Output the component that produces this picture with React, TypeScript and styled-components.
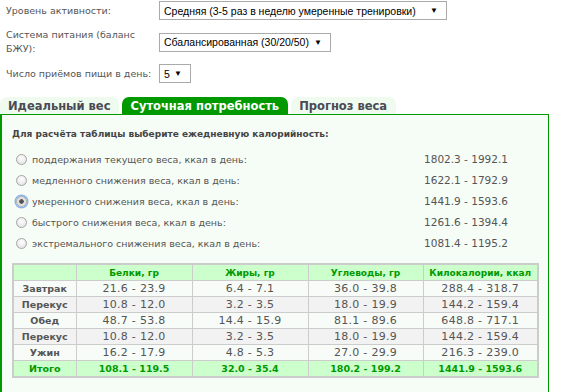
import React from 'react'
import styled, { createGlobalStyle } from 'styled-components'

const GlobalStyle = createGlobalStyle`
  body {
    margin: 0;
    background: #fff;
    font-family: "DejaVu Sans", Verdana, sans-serif;
    font-size: 9.5px;
    color: #555;
  }
`

const green = '#009900'

const options = [
  { label: 'поддержания текущего веса, ккал в день:', value: '1802.3 - 1992.1' },
  { label: 'медленного снижения веса, ккал в день:', value: '1622.1 - 1792.9' },
  { label: 'умеренного снижения веса, ккал в день:', value: '1441.9 - 1593.6', checked: true },
  { label: 'быстрого снижения веса, ккал в день:', value: '1261.6 - 1394.4' },
  { label: 'экстремального снижения веса, ккал в день:', value: '1081.4 - 1195.2' },
]

const meals = [
  ['Завтрак', '21.6 - 23.9', '6.4 - 7.1', '36.0 - 39.8', '288.4 - 318.7'],
  ['Перекус', '10.8 - 12.0', '3.2 - 3.5', '18.0 - 19.9', '144.2 - 159.4'],
  ['Обед', '48.7 - 53.8', '14.4 - 15.9', '81.1 - 89.6', '648.8 - 717.1'],
  ['Перекус', '10.8 - 12.0', '3.2 - 3.5', '18.0 - 19.9', '144.2 - 159.4'],
  ['Ужин', '16.2 - 17.9', '4.8 - 5.3', '27.0 - 29.9', '216.3 - 239.0'],
]

const App = () => {
  return (
    <Page>
      <GlobalStyle />
      <Form>
        <Label>Уровень активности:</Label>
        <Select $width={288}>
          <span>Средняя (3-5 раз в неделю умеренные тренировки)</span>
          <Arrow>▼</Arrow>
        </Select>
        <Label>Система питания (баланс БЖУ):</Label>
        <Select $width={172}>
          <span>Сбалансированная (30/20/50)</span>
          <Arrow>▼</Arrow>
        </Select>
        <Label>Число приёмов пищи в день:</Label>
        <Select $width={32}>
          <span>5</span>
          <Arrow>▼</Arrow>
        </Select>
      </Form>

      <Tabs>
        <Tab>Идеальный вес</Tab>
        <Tab $active>Суточная потребность</Tab>
        <Tab>Прогноз веса</Tab>
      </Tabs>

      <Panel>
        <Heading>Для расчёта таблицы выберите ежедневную калорийность:</Heading>
        <Options>
          {options.map((o) => (
            <Option key={o.label}>
              <Radio $checked={!!o.checked} />
              <OptionLabel>{o.label}</OptionLabel>
              <OptionValue>{o.value}</OptionValue>
            </Option>
          ))}
        </Options>

        <Table>
          <colgroup>
            <col style={{ width: 63 }} />
            <col style={{ width: 116 }} />
            <col style={{ width: 116 }} />
            <col style={{ width: 115 }} />
            <col style={{ width: 115 }} />
          </colgroup>
          <thead>
            <tr>
              <HeadCell />
              <HeadCell>Белки, гр</HeadCell>
              <HeadCell>Жиры, гр</HeadCell>
              <HeadCell>Углеводы, гр</HeadCell>
              <HeadCell>Килокалории, ккал</HeadCell>
            </tr>
          </thead>
          <tbody>
            {meals.map((row, i) => (
              <Row key={i} $odd={i % 2 === 1}>
                <MealCell>{row[0]}</MealCell>
                {row.slice(1).map((v, j) => (
                  <Cell key={j}>{v}</Cell>
                ))}
              </Row>
            ))}
            <TotalRow>
              <td>Итого</td>
              <td>108.1 - 119.5</td>
              <td>32.0 - 35.4</td>
              <td>180.2 - 199.2</td>
              <td>1441.9 - 1593.6</td>
            </TotalRow>
          </tbody>
        </Table>
      </Panel>
    </Page>
  )
}

const Page = styled.div`
  width: 573px;
  height: 392px;
  overflow: hidden;
`

const Form = styled.div`
  display: grid;
  grid-template-columns: 153px auto;
  row-gap: 8px;
  align-items: center;
  justify-items: start;
  padding: 1px 0 0 6px;
`

const Label = styled.div`
  line-height: 14px;
  width: 152px;
  color: #555;
`

const Select = styled.div<{ $width: number }>`
  display: flex;
  align-items: center;
  justify-content: space-between;
  box-sizing: border-box;
  width: ${(p) => p.$width}px;
  height: 19px;
  padding: 0 8px 0 4px;
  border: 1px solid #aaa;
  background: #fff;
  color: #000;
  font-family: "Liberation Sans", Arial, sans-serif;
  font-size: 10.5px;
  white-space: nowrap;
`

const Arrow = styled.span`
  font-size: 8px;
`

const Tabs = styled.div`
  display: flex;
  gap: 3px;
  margin-top: 14px;
  height: 17px;
  align-items: flex-end;
`

const Tab = styled.div<{ $active?: boolean }>`
  height: 17px;
  line-height: 18px;
  padding: 0 9px 0 8px;
  border-radius: 7px 7px 0 0;
  font-weight: bold;
  font-size: 11.5px;
  background: ${(p) => (p.$active ? green : '#eefbee')};
  color: ${(p) => (p.$active ? '#fff' : '#4a4a55')};
`

const Panel = styled.div`
  width: 536px;
  border: 1px solid ${green};
  border-left-width: 2px;
  background: #f6fcf6;
  padding: 12px 0 40px 10px;
`

const Heading = styled.div`
  font-weight: bold;
  font-size: 9px;
  color: #444;
  line-height: 14px;
`

const Options = styled.div`
  display: flex;
  flex-direction: column;
  gap: 7px;
  margin-top: 11px;
  width: 496px;
`

const Option = styled.div`
  display: flex;
  align-items: center;
  height: 14px;
  padding-left: 4px;
`

const Radio = styled.span<{ $checked: boolean }>`
  width: 9px;
  height: 9px;
  border-radius: 50%;
  border: 1px solid #a5a5a5;
  background: ${(p) =>
    p.$checked
      ? 'radial-gradient(circle, #555 0 2px, #ddd 2.5px, #f4f4f4 100%)'
      : 'radial-gradient(circle at 50% 35%, #fff 0, #ddd 100%)'};
  box-shadow: ${(p) => (p.$checked ? '0 0 0 1.5px #8ab4f0' : 'none')};
  margin-right: 5px;
  flex-shrink: 0;
`

const OptionLabel = styled.span`
  color: #555;
`

const OptionValue = styled.span`
  margin-left: auto;
  color: #555;
  font-size: 10.5px;
`

const Table = styled.table`
  margin-top: 13px;
  border-collapse: collapse;
  table-layout: fixed;
  width: 525px;
  border: 2px solid #ccc;
  td, th {
    border: 1px solid #ccc;
    height: 15px;
    padding: 0;
    text-align: center;
    line-height: 14px;
    white-space: nowrap;
  }
`

const HeadCell = styled.th`
  background: #ccffcc;
  color: ${green};
  font-weight: bold;
  font-size: 9px;
`

const Row = styled.tr<{ $odd: boolean }>`
  background: ${(p) => (p.$odd ? '#f2f2f2' : '#f8fcf8')};
  color: #555;
`

const MealCell = styled.td`
  font-weight: bold;
  font-size: 9.5px;
`

const Cell = styled.td`
  font-size: 11px;
  letter-spacing: 0.3px;
`

const TotalRow = styled.tr`
  background: #ccffcc;
  color: ${green};
  font-weight: bold;
  font-size: 9.5px;
`

export default App
